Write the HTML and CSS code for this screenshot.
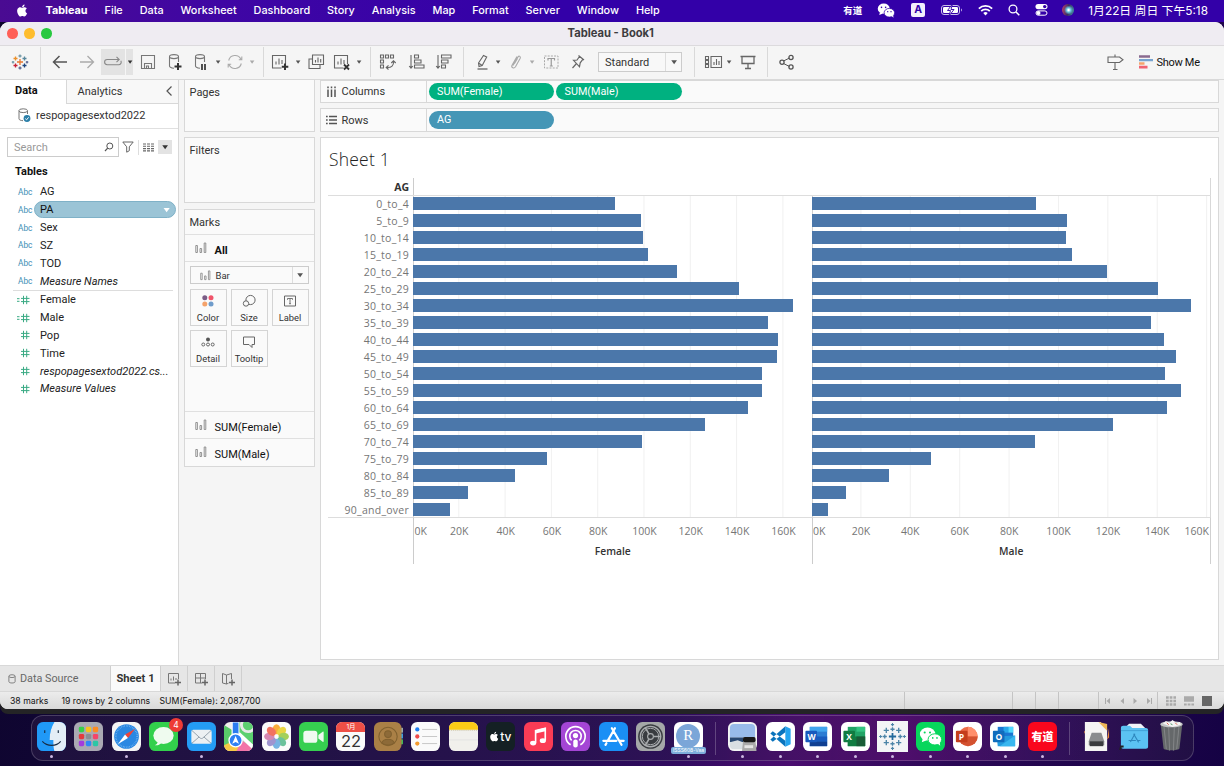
FILE: index.html
```html
<!DOCTYPE html>
<html lang="en">
<head>
<meta charset="utf-8">
<title>Tableau - Book1</title>
<link rel="stylesheet" href="styles.css">
</head>
<body>
<svg class="defs" aria-hidden="true">
  <defs>
    <symbol id="bars" viewBox="0 0 12 12"><path d="M.8 3.500h1.600v7H.8zM5 6.500h1.600v4H5zM9.200 1h1.600v9.500H9.200z" fill="none" stroke="#888" stroke-width=".9"/></symbol>
    <symbol id="hash" viewBox="0 0 14 10"><path d="M6.500 .8v8.400M9.700 .8v8.400M4 3.400h8.500M4 6.600h8.500" stroke="#3aab84" stroke-width="1" fill="none"/></symbol>
    <symbol id="eqhash" viewBox="0 0 14 10"><path d="M6.500 .8v8.400M9.700 .8v8.400M4 3.400h8.500M4 6.600h8.500M0 3.700h2.500M0 6.300h2.500" stroke="#3aab84" stroke-width="1" fill="none"/></symbol>
    <symbol id="down" viewBox="0 0 8 6"><path d="M1.800 1.500h4.600L4.100 4.700z" fill="currentColor"/></symbol>
    <symbol id="chart" viewBox="0 0 20 20"><path d="M15.500 12V3.500h-13v12.500h9M6 12.500V9.500M9 12.500V6.500M12 12V8" fill="none" stroke="#666" stroke-width="1.100"/></symbol>
    <symbol id="wechat" viewBox="0 0 24 20"><ellipse cx="9" cy="7.500" rx="8" ry="6.700"/><path d="M4 12l-1 4 5-2z"/><ellipse cx="16.500" cy="13" rx="7" ry="5.800" stroke="var(--ring)" stroke-width="1"/><path d="M19 17l3 2.500-.5-4z"/><g fill="var(--ring)"><circle cx="6" cy="5.800" r="1.100"/><circle cx="11.500" cy="5.800" r="1.100"/><circle cx="14.300" cy="11.500" r=".9"/><circle cx="18.700" cy="11.500" r=".9"/></g></symbol>
    <symbol id="apple" viewBox="0 0 24 24"><path d="M16.700 12.700c0-2.500 2-3.700 2.100-3.800-1.200-1.700-3-1.900-3.600-2-1.500-.1-3 .9-3.700.9-.8 0-2-.9-3.200-.9-1.700 0-3.200 1-4.100 2.400-1.700 3-.4 7.500 1.300 9.900.8 1.200 1.800 2.600 3.100 2.500 1.200 0 1.700-.8 3.200-.8s1.900.8 3.200.8c1.300 0 2.200-1.200 3-2.400 1-1.400 1.300-2.700 1.400-2.800-.1 0-2.700-1-2.700-3.800zM14.300 5.400c.7-.8 1.100-2 1-3.100-1 0-2.200.7-2.900 1.500-.6.700-1.200 1.900-1 3 1.100.1 2.200-.6 2.900-1.400z"/></symbol>
  </defs>
</svg>

<header class="menubar">
  <svg class="apple" viewBox="0 0 24 24"><use href="#apple" fill="#fff"/></svg>
  <b class="m-app">Tableau</b><span>File</span><span>Data</span><span>Worksheet</span><span>Dashboard</span><span>Story</span><span>Analysis</span><span>Map</span><span>Format</span><span>Server</span><span>Window</span><span>Help</span>
  <div class="tray">
    <b class="youdao">有道</b>
    <svg class="t-wechat" viewBox="0 0 24 20"><use href="#wechat" fill="#fff"/></svg>
    <i class="ime">A</i>
    <svg class="t-batt" viewBox="0 0 22 12"><rect x=".5" y="1.500" width="18" height="9" rx="2.500" fill="none" stroke="#c9bde8"/><rect x="2" y="3" width="15" height="6" rx="1.200" fill="#fff"/><path d="M20 4.500v3c1.200-.3 1.200-2.700 0-3z" fill="#c9bde8"/><path d="M11.500 0L6.500 6.500h3L8 12l5-6.500h-3z" fill="#fff" stroke="#3300a8" stroke-width=".9"/></svg>
    <svg class="t-wifi" viewBox="0 0 14 11"><path d="M.8 4.200a9 9 0 0 1 12.400 0M3 6.500a5.800 5.800 0 0 1 8 0" stroke="#fff" stroke-width="1.700" fill="none"/><path d="M4.900 8.400a3 3 0 0 1 4.200 0L7 10.600z" fill="#fff"/></svg>
    <svg class="t-find" viewBox="0 0 12 12"><circle cx="5" cy="5" r="3.900" fill="none" stroke="#fff" stroke-width="1.300"/><path d="M8 8l3.300 3.300" stroke="#fff" stroke-width="1.500"/></svg>
    <svg class="t-cc" viewBox="0 0 12 12"><rect width="12" height="5.200" rx="2.600" fill="#fff"/><circle cx="9.200" cy="2.600" r="1.700" fill="#3300a8"/><rect x=".5" y="6.900" width="11" height="4.300" rx="2.150" fill="none" stroke="#fff"/><circle cx="3" cy="9" r="2" fill="#fff"/></svg>
    <i class="siri"></i>
    <span class="clock">1月22日 周日 下午5:18</span>
  </div>
</header>

<main class="window">
  <div class="titlebar"><i class="dot red"></i><i class="dot amber"></i><i class="dot green"></i><b>Tableau - Book1</b></div>

  <div class="toolbar">
    <svg class="ic m10" viewBox="0 0 20 20"><g stroke-width="1.300" fill="none"><path d="M10 7v6M7 10h6" stroke="#e8762c"/><path d="M10 2.500v3M8.500 4h3" stroke="#7199a6"/><path d="M10 14.500v3M8.500 16h3" stroke="#5b6591"/><path d="M5.500 4.500v4M3.500 6.500h4" stroke="#eb912c"/><path d="M14.500 4.500v4M12.500 6.500h4" stroke="#59879b"/><path d="M5.500 11.500v4M3.500 13.500h4" stroke="#c72035"/><path d="M14.500 11.500v4M12.500 13.500h4" stroke="#1f447e"/><path d="M3 9v2.500M1.800 10.200h2.500" stroke="#7099a6"/><path d="M17 9v2.500M15.800 10.200h2.500" stroke="#5b6591"/></g></svg>
    <i class="sep m10"></i>
    <svg class="ic m9" viewBox="0 0 20 20"><path d="M17 10H3.500M9.500 4L3.500 10l6 6" fill="none" stroke="#555" stroke-width="1.500"/></svg>
    <svg class="ic m7" viewBox="0 0 20 20"><path d="M3 10h13.500M10.500 4l6 6-6 6" fill="none" stroke="#aaa" stroke-width="1.300"/></svg>
    <span class="hot m4"><svg class="ic" viewBox="0 0 20 20"><path d="M15.500 7.500H4.200a2.600 2.600 0 0 0 0 5.200H16a2.600 2.600 0 0 0 1.800-4M13.500 4.800l2.700 2.700-2.700 2.700" fill="none" stroke="#888" stroke-width="1.100"/></svg></span>
    <span class="hot slim m1"><svg class="dd dark" viewBox="0 0 8 6"><use href="#down"/></svg></span>
    <svg class="ic m5" viewBox="0 0 20 20"><path d="M3.500 3.500h13v13h-13zM6.500 16v-4.500h7V16M8.500 16v-2h2v2" fill="none" stroke="#777" stroke-width="1.100"/></svg>
    <svg class="ic m7" viewBox="0 0 20 20"><path d="M4.500 4.500v9.500c0 1.500 2 2 4.500 2.200M13.500 4.500V10" fill="none" stroke="#777" stroke-width="1.100"/><ellipse cx="9" cy="4.600" rx="4.500" ry="2" fill="none" stroke="#777" stroke-width="1.100"/><path d="M13 11v7M9.500 14.500h7" stroke="#333" stroke-width="2"/></svg>
    <svg class="ic m6" viewBox="0 0 20 20"><path d="M4.500 4.500v9.500c0 1.500 2 2 4.500 2.200M13.500 4.500V10" fill="none" stroke="#777" stroke-width="1.100"/><ellipse cx="9" cy="4.600" rx="4.500" ry="2" fill="none" stroke="#777" stroke-width="1.100"/><path d="M11 12v6M14 12v6" stroke="#333" stroke-width="1.700"/></svg>
    <svg class="dd m3" viewBox="0 0 8 6"><use href="#down"/></svg>
    <svg class="ic m3" viewBox="0 0 20 20"><path d="M3.700 8.500a6.500 6.500 0 0 1 12.200-1.300M16.300 11.500a6.500 6.500 0 0 1-12.200 1.300M16.800 4.500v3.200h-3M3.200 15.500v-3.200h3" fill="none" stroke="#aaa" stroke-width="1.100"/></svg>
    <svg class="dd pale m3" viewBox="0 0 8 6"><use href="#down"/></svg>
    <i class="sep m7"></i>
    <svg class="ic m6" viewBox="0 0 20 20"><use href="#chart"/><path d="M15 11.500v6.500M11.800 14.800h6.500" stroke="#333" stroke-width="2"/></svg>
    <svg class="dd m4" viewBox="0 0 8 6"><use href="#down"/></svg>
    <svg class="ic m4" viewBox="0 0 20 20"><path d="M6.500 3h11v9.500h-11zM6 7H3v9.500h11V13M9.500 10.500V8M12 10.500V5.500M14.700 10.500V7" fill="none" stroke="#666" stroke-width="1.100"/></svg>
    <svg class="ic m6" viewBox="0 0 20 20"><use href="#chart"/><path d="M12 12.500l5 5M17 12.500l-5 5" stroke="#333" stroke-width="1.800"/></svg>
    <svg class="dd m3" viewBox="0 0 8 6"><use href="#down"/></svg>
    <i class="sep m7"></i>
    <svg class="ic m7" viewBox="0 0 20 20"><path d="M2.500 3h3v3h-3zM7.500 3h3v3h-3zM12.500 3h3v3h-3zM2.500 8h3v3h-3zM2.500 13h3v3h-3zM8.500 15.500c5 .5 7.500-2 7-6.500M10.500 13.300l-2.300 2.200 2.300 2M13.300 11l2.200-2.300 2.200 2.300" fill="none" stroke="#666" stroke-width="1.100"/></svg>
    <svg class="ic m9" viewBox="0 0 20 20"><path d="M4 3v13M2.200 14l1.800 2.200L5.800 14M7.500 3h4v3h-4zM7.500 8h6.500v3H7.500zM7.500 13h9.500v3H7.500z" fill="none" stroke="#666" stroke-width="1.100"/></svg>
    <svg class="ic m7" viewBox="0 0 20 20"><path d="M4 3v13M2.200 14l1.800 2.200L5.800 14M7.500 3h9.500v3H7.500zM7.500 8H14v3H7.500zM7.500 13h4v3h-4z" fill="none" stroke="#666" stroke-width="1.100"/></svg>
    <i class="sep m9"></i>
    <svg class="ic m9" viewBox="0 0 20 20"><path d="M5.500 11L10.500 3.500l3.200 1.500-4.500 8.500-3.200 1zM5.500 11l3.700 2.500" fill="none" stroke="#666" stroke-width="1.100"/><path d="M4.500 17h10" stroke="#777" stroke-width="1.500"/></svg>
    <svg class="dd m1" viewBox="0 0 8 6"><use href="#down"/></svg>
    <svg class="ic m4" viewBox="0 0 20 20"><path d="M7 13.500l5-8.500c1-1.600 3-.5 2.200 1.200L9.500 14.800c-1.500 2.300-4.600.8-3.500-1.600L11 4.500M8.500 11.500l3-5" fill="none" stroke="#aaa" stroke-width="1.100"/></svg>
    <svg class="dd pale m2" viewBox="0 0 8 6"><use href="#down"/></svg>
    <svg class="ic m5" viewBox="0 0 20 20"><rect x="3.500" y="4" width="13.500" height="12" fill="none" stroke="#aaa" stroke-dasharray="2 1.200"/><path d="M7 8.500v-2h6.500v2M10.250 6.500v7.500M8.800 14h3" fill="none" stroke="#999" stroke-width="1.200"/></svg>
    <svg class="ic m7" viewBox="0 0 20 20"><path d="M10.500 3.500l5.500 4.500M11.500 4.500L9 8l-3.500.3 6 6.500.7-4L15 7.200M8.500 11.500L4.500 16" fill="none" stroke="#666" stroke-width="1.200"/></svg>
    <div class="select m10"><span>Standard</span><i><svg class="dd big" viewBox="0 0 8 6"><use href="#down"/></svg></i></div>
    <i class="sep m12"></i>
    <svg class="ic m9" viewBox="0 0 20 20"><path d="M1.500 4.500h3v3h-3zM1.500 8.500h3v3h-3zM1.500 12.500h3v3h-3zM7 4.500h10.500v11H7zM10 13v-3M12.500 13V7M15 13V9" fill="none" stroke="#666" stroke-width="1.100"/></svg>
    <svg class="dd m1" viewBox="0 0 8 6"><use href="#down"/></svg>
    <svg class="ic m5" viewBox="0 0 20 20"><path d="M2.500 4.500h15M4 5v6.500h12V5M10 11.500V16M7 16.500h6" fill="none" stroke="#666" stroke-width="1.300"/></svg>
    <i class="sep m9"></i>
    <svg class="ic m9" viewBox="0 0 20 20"><path d="M6.500 9l6-3M6.500 11.500l6 3" stroke="#555"/><g fill="none" stroke="#555" stroke-width="1.300"><circle cx="5" cy="10.300" r="2.100"/><circle cx="14" cy="5.500" r="2.100"/><circle cx="14" cy="15" r="2.100"/></g></svg>
    <div class="showme">
      <svg class="ic" viewBox="0 0 20 20"><path d="M3 5h11.500L18 7.800l-3.500 2.700H3zM10 2.500V5M10 10.500v7M8 17.500h4.500" fill="none" stroke="#666" stroke-width="1.100"/></svg>
      <svg class="sm-bars" viewBox="0 0 14 14"><path d="M0 .3h11v2.400H0z" fill="#8a6a8f"/><path d="M0 3.900h14v2.400H0z" fill="#77a3cf"/><path d="M0 7.300h5.500v2.400H0z" fill="#f5a36c"/><path d="M0 10.800h8.500v2.700H0z" fill="#f06372"/></svg>
      <span>Show Me</span>
    </div>
  </div>

  <div class="body">
    <aside class="data">
      <div class="dtabs"><b>Data</b><span>Analytics<svg viewBox="0 0 8 12"><path d="M6.500 1.500L2 6l4.500 4.500" fill="none" stroke="#555" stroke-width="1.200"/></svg></span></div>
      <div class="source"><svg viewBox="0 0 13 14"><path d="M1 2.800v8c0 1 1.500 1.700 4 1.900M9.500 2.800V6" fill="none" stroke="#777"/><ellipse cx="5.200" cy="2.700" rx="4.300" ry="1.900" fill="none" stroke="#777"/><circle cx="9" cy="10.500" r="3.400" fill="#2b7fa8"/><path d="M7.300 10.600l1.300 1.200 2-2.500" stroke="#fff" fill="none"/></svg><span>respopagesextod2022</span></div>
      <div class="searchrow">
        <div class="search"><span>Search</span><svg viewBox="0 0 10 10"><circle cx="5.800" cy="4" r="3" fill="none" stroke="#555"/><path d="M3.700 6.200L1 9" stroke="#555" stroke-width="1.200"/></svg></div>
        <svg class="funnel" viewBox="0 0 12 12"><path d="M.8 1h10.400L7.300 5.800v3.900l-2.600 1.500V5.800z" fill="none" stroke="#666"/></svg>
        <i class="vsep"></i>
        <svg class="gridic" viewBox="0 0 11 9"><path d="M0 1h11M0 3.300h11M0 5.600h11M0 7.900h11" stroke="#666" stroke-width="1.100" stroke-dasharray="3 1"/></svg>
        <span class="drop"><svg class="dd big dark" viewBox="0 0 8 6"><use href="#down"/></svg></span>
      </div>
      <b class="tables">Tables</b>
      <ul class="fields dims">
        <li><i>Abc</i><span>AG</span></li>
        <li class="sel"><i>Abc</i><span>PA<svg class="dd white" viewBox="0 0 8 6"><use href="#down"/></svg></span></li>
        <li><i>Abc</i><span>Sex</span></li>
        <li><i>Abc</i><span>SZ</span></li>
        <li><i>Abc</i><span>TOD</span></li>
        <li><i>Abc</i><em>Measure Names</em></li>
      </ul>
      <ul class="fields meas">
        <li><svg viewBox="0 0 14 10"><use href="#eqhash"/></svg><span>Female</span></li>
        <li><svg viewBox="0 0 14 10"><use href="#eqhash"/></svg><span>Male</span></li>
        <li><svg viewBox="0 0 14 10"><use href="#hash"/></svg><span>Pop</span></li>
        <li><svg viewBox="0 0 14 10"><use href="#hash"/></svg><span>Time</span></li>
        <li><svg viewBox="0 0 14 10"><use href="#hash"/></svg><em class="long">respopagesextod2022.cs...</em></li>
        <li><svg viewBox="0 0 14 10"><use href="#hash"/></svg><em>Measure Values</em></li>
      </ul>
    </aside>

    <section class="cards">
      <div class="card pages">Pages</div>
      <div class="card filters">Filters</div>
      <div class="card marks">
        <div class="mhead">Marks</div>
        <div class="mrow all"><svg viewBox="0 0 12 12"><use href="#bars"/></svg><b>All</b></div>
        <div class="mbody">
          <div class="mtype"><svg viewBox="0 0 12 12"><use href="#bars"/></svg><span>Bar</span><i><svg class="dd big" viewBox="0 0 8 6"><use href="#down"/></svg></i></div>
          <div class="mbtns">
            <div><svg viewBox="0 0 14 14"><circle cx="3.800" cy="3.800" r="2.500" fill="#7b5c86"/><circle cx="10" cy="3.800" r="2.500" fill="#f0556b"/><circle cx="3.800" cy="10" r="2.500" fill="#f4a26b"/><circle cx="10" cy="10" r="2.500" fill="#6f9ccb"/></svg>Color</div>
            <div><svg viewBox="0 0 14 14"><circle cx="8.500" cy="6" r="4.600" fill="none" stroke="#666"/><circle cx="4" cy="9.500" r="2.700" fill="#fafafa" stroke="#666"/></svg>Size</div>
            <div><svg viewBox="0 0 14 14"><path d="M1.500 2h11v10h-11z" fill="none" stroke="#666"/><path d="M4.500 5.800V4.500h5v1.300M7 4.500v5M6 9.700h2" fill="none" stroke="#666" stroke-width=".9"/></svg>Label</div>
            <div><svg viewBox="0 0 14 14"><circle cx="7" cy="4.500" r="2" fill="#555"/><g fill="none" stroke="#666"><circle cx="2.300" cy="9.500" r="1.500"/><circle cx="7" cy="9.500" r="1.500"/><circle cx="11.700" cy="9.500" r="1.500"/></g></svg>Detail</div>
            <div><svg viewBox="0 0 14 14"><path d="M1.500 2h11v7.500H10v3l-3-3H1.500z" fill="none" stroke="#666"/></svg>Tooltip</div>
          </div>
        </div>
        <div class="mrow"><svg viewBox="0 0 12 12"><use href="#bars"/></svg><span>SUM(Female)</span></div>
        <div class="mrow"><svg viewBox="0 0 12 12"><use href="#bars"/></svg><span>SUM(Male)</span></div>
      </div>
    </section>

    <section class="work">
      <div class="shelf">
        <div class="sname"><svg viewBox="0 0 11 11"><path d="M2 3.500V11M5.500 3.500V11M9 3.500V11M2 .5v1.700M5.500 .5v1.700M9 .5v1.700" stroke="#555" stroke-width="1.500"/></svg>Columns</div>
        <span class="pill green">SUM(Female)</span><span class="pill green">SUM(Male)</span>
      </div>
      <div class="shelf rows">
        <div class="sname"><svg viewBox="0 0 11 11"><path d="M3 1.500h8M3 5h8M3 8.500h8M0 1.500h1.700M0 5h1.700M0 8.500h1.700" stroke="#555" stroke-width="1.400"/></svg>Rows</div>
        <span class="pill blue">AG</span>
      </div>
      <div class="sheet">
        <h1>Sheet 1</h1>
        <div class="viz">
          <div class="vhead"><b>AG</b><i></i></div>
          <div class="vmain">
            <div class="labels" id="labels"></div>
            <div class="pane" id="female"></div>
            <div class="pane" id="male"></div>
          </div>
          <div class="vaxes">
            <div class="corner"></div>
            <div class="axis" id="axis-female"><b>Female</b></div>
            <div class="axis" id="axis-male"><b>Male</b></div>
          </div>
        </div>
      </div>
    </section>
  </div>

  <div class="tabs">
    <div class="tab src"><svg viewBox="0 0 9 11"><path d="M1 2.500v6c0 2 7 2 7 0v-6" fill="none" stroke="#777"/><ellipse cx="4.500" cy="2.300" rx="3.500" ry="1.600" fill="none" stroke="#777"/></svg><span>Data Source</span></div>
    <div class="tab cur"><b>Sheet 1</b></div>
    <div class="tab add"><svg viewBox="0 0 14 14"><path d="M11.500 7V1.500h-10V11H8M4 8.500v-2M6.500 8.500v-4M9 8V6" fill="none" stroke="#777"/><path d="M11 7.500v6M8 10.500h6" stroke="#666" stroke-width="1.500"/></svg></div>
    <div class="tab add"><svg viewBox="0 0 14 14"><path d="M11.500 7V1.500h-10V11H8M1.500 6h10M6.500 1.500V11" fill="none" stroke="#777"/><path d="M11 7.500v6M8 10.500h6" stroke="#666" stroke-width="1.500"/></svg></div>
    <div class="tab add"><svg viewBox="0 0 14 14"><path d="M1.500 1.500l4 1.500 5-1.500V7M1.500 1.500V11l4 1 2-.8M5.500 3v9" fill="none" stroke="#777"/><path d="M11 7.500v6M8 10.500h6" stroke="#666" stroke-width="1.500"/></svg></div>
  </div>
  <div class="status">
    <span class="s1">38 marks</span><span class="s2">19 rows by 2 columns</span><span class="s3">SUM(Female): 2,087,700</span>
    <i class="c1"></i><i class="c2"></i><i class="c2"></i><i class="c3"></i>
    <div class="nav">
      <svg viewBox="0 0 8 8"><path d="M1.500 1v6" stroke="#aaa"/><path d="M6 1L2.500 4 6 7z" fill="#aaa"/></svg>
      <svg viewBox="0 0 8 8"><path d="M6 1L2.500 4 6 7z" fill="#aaa"/></svg>
      <svg viewBox="0 0 8 8"><path d="M2.500 1L6 4 2.500 7z" fill="#aaa"/></svg>
      <svg viewBox="0 0 8 8"><path d="M6.500 1v6" stroke="#aaa"/><path d="M2 1l3.500 3L2 7z" fill="#aaa"/></svg>
    </div>
    <div class="views">
      <svg viewBox="0 0 10 10"><path d="M0 1.500h10M0 5h10M0 8.500h10" stroke="#aaa" stroke-width="2.400" stroke-dasharray="2.700 1"/></svg>
      <svg viewBox="0 0 10 10"><path d="M0 .3h10v5.500H0z" fill="#aaa"/><path d="M0 8.500h10" stroke="#aaa" stroke-width="2.200" stroke-dasharray="2.700 1"/></svg>
      <svg viewBox="0 0 10 10"><path d="M0 0h10v10H0z" fill="#666"/></svg>
    </div>
  </div>
</main>

<footer class="dock">
  <div class="app run"><svg viewBox="0 0 30 30"><rect width="30" height="30" rx="6.500" fill="#1b8df5"/><path d="M18 0h5.500a6.500 6.500 0 0 1 6.500 6.500v17a6.500 6.500 0 0 1-6.500 6.500H18c-1-3-1.200-7-1.200-11.500H13C13 11 15 5 18 0z" fill="#e3edf6"/><path d="M6 0h12c-3 5-5 11-5 18.500h3.800V30H6.500A6.500 6.500 0 0 1 0 23.500v-17A6.500 6.500 0 0 1 6.500 0z" fill="#29a8fa" opacity=".45"/><path d="M8 8.500v3M22 8.500v3M5.500 20c5 5.500 14.500 5.500 19 0" stroke="#182c44" stroke-width="1.200" fill="none"/></svg></div>
  <div class="app"><svg viewBox="0 0 30 30"><rect width="30" height="30" rx="6.500" fill="#aaa9b3"/><g><rect x="5" y="5" width="5.500" height="5.500" rx="1.500" fill="#37d04b"/><rect x="12.300" y="5" width="5.500" height="5.500" rx="1.500" fill="#f8c21c"/><rect x="19.500" y="5" width="5.500" height="5.500" rx="1.500" fill="#fd8b23"/><rect x="5" y="12.300" width="5.500" height="5.500" rx="1.500" fill="#e43a3d"/><rect x="12.300" y="12.300" width="5.500" height="5.500" rx="1.500" fill="#8a8e95"/><rect x="19.500" y="12.300" width="5.500" height="5.500" rx="1.500" fill="#f4466b"/><rect x="5" y="19.500" width="5.500" height="5.500" rx="1.500" fill="#a33bdd"/><rect x="12.300" y="19.500" width="5.500" height="5.500" rx="1.500" fill="#3087f5"/><rect x="19.500" y="19.500" width="5.500" height="5.500" rx="1.500" fill="#2cc7a5"/></g></svg></div>
  <div class="app run"><svg viewBox="0 0 30 30"><rect width="30" height="30" rx="6.500" fill="#f4f4f4"/><circle cx="15" cy="15" r="12.800" fill="#2a87e2"/><circle cx="15" cy="15" r="11" fill="none" stroke="#8fc7f6" stroke-width="1.500" stroke-dasharray=".5 1.200"/><path d="M24 7L13.500 13l3 3.500z" fill="#f04438"/><path d="M6 23l7.500-10 3 3.500z" fill="#fff"/></svg></div>
  <div class="app"><svg viewBox="0 0 30 30"><rect width="30" height="30" rx="6.500" fill="#32d04c"/><ellipse cx="15" cy="14" rx="10.500" ry="8.800" fill="#effbef"/><path d="M9 20c0 2-1 3.500-3 4 3 .5 5-.5 6.500-2z" fill="#effbef"/></svg><em class="badge">4</em></div>
  <div class="app run"><svg viewBox="0 0 30 30"><rect width="30" height="30" rx="6.500" fill="#249cf5"/><rect x="4.500" y="8" width="21" height="14.500" rx="2" fill="#ecf0f3"/><path d="M5 8.700l8.500 7.800c1 .8 2 .8 3 0L25 8.700M5 22l7.500-6.500M25 22l-7.500-6.500" stroke="#8a98a5" stroke-width=".9" fill="none"/></svg></div>
  <div class="app"><svg viewBox="0 0 30 30"><clipPath id="mapclip"><rect width="30" height="30" rx="6.500"/></clipPath><g clip-path="url(#mapclip)"><rect width="30" height="30" fill="#f1efec"/><path d="M0 3l8 5v14L0 25z" fill="#59c969"/><path d="M15 0h15v30L15 15z" fill="#5dd070"/><path d="M0 30V24l9-4 14 10z" fill="#f6c945"/><path d="M13 30l5-11 12 7v4z" fill="#f274a8"/><path d="M15 12l15 14" stroke="#fff" stroke-width="4"/><circle cx="25" cy="3" r="7" fill="none" stroke="#e8e8e8" stroke-width="3"/><path d="M8.500 0h7v15h-7z" fill="#2b7cf0" stroke="#fff"/><circle cx="12" cy="19" r="6.800" fill="#2f80f3" stroke="#fff" stroke-width="1.400"/><path d="M12 14.500l3.500 8-3.500-1.800-3.500 1.800z" fill="#fff"/></g></svg></div>
  <div class="app"><svg viewBox="0 0 30 30"><rect width="30" height="30" rx="6.500" fill="#fbfbfb"/><g opacity=".85" transform="translate(15 15)"><ellipse cy="-7.500" rx="4" ry="5.300" fill="#f9a11b"/><ellipse cy="-7.500" rx="4" ry="5.300" fill="#e7cf24" transform="rotate(45)"/><ellipse cy="-7.500" rx="4" ry="5.300" fill="#96c93f" transform="rotate(90)"/><ellipse cy="-7.500" rx="4" ry="5.300" fill="#52b98b" transform="rotate(135)"/><ellipse cy="-7.500" rx="4" ry="5.300" fill="#5fa7de" transform="rotate(180)"/><ellipse cy="-7.500" rx="4" ry="5.300" fill="#8f83c8" transform="rotate(225)"/><ellipse cy="-7.500" rx="4" ry="5.300" fill="#d175a7" transform="rotate(270)"/><ellipse cy="-7.500" rx="4" ry="5.300" fill="#f15b45" transform="rotate(315)"/></g></svg></div>
  <div class="app"><svg viewBox="0 0 30 30"><rect width="30" height="30" rx="6.500" fill="#36cf50"/><rect x="4.500" y="9" width="14.500" height="12.500" rx="3" fill="#effaf0"/><path d="M20 13.500l4.500-3.500c.8-.4 1 0 1 .5v9.500c0 .7-.5.9-1 .5L20 17z" fill="#effaf0"/></svg></div>
  <div class="app cal"><span><i>1月</i><b>22</b></span></div>
  <div class="app"><svg viewBox="0 0 30 30"><path d="M27 6h3v5h-3z" fill="#9aa"/><path d="M27 12h3v5h-3z" fill="#3d9fe0"/><path d="M27 18h3v5h-3z" fill="#46b756"/><rect width="28.500" height="30" rx="6.500" fill="#aa8046"/><g fill="none" stroke="#80602f" stroke-width="1.100"><circle cx="14.500" cy="15" r="9.500"/><circle cx="14.500" cy="12.500" r="3.500" fill="#8d6a38"/><path d="M8 21.500c2-5 11-5 13 0-3 3-10 3-13 0z" fill="#8d6a38"/></g></svg></div>
  <div class="app"><svg viewBox="0 0 30 30"><rect width="30" height="30" rx="6.500" fill="#fafafa"/><circle cx="6.500" cy="7.700" r="2.200" fill="#1d7df0"/><circle cx="6.500" cy="15" r="2.200" fill="#f04b48"/><circle cx="6.500" cy="22.300" r="2.200" fill="#f39a2d"/><path d="M11.500 7.700H27M11.500 15H27M11.500 22.300H27" stroke="#c6c6c6"/></svg></div>
  <div class="app"><svg viewBox="0 0 30 30"><rect width="30" height="30" rx="6.500" fill="#f1f0ec"/><path d="M0 8V6.500A6.500 6.500 0 0 1 6.500 0h17A6.500 6.500 0 0 1 30 6.500V8z" fill="#fccb16"/><path d="M0 8.600h30" stroke="#b5a67a" stroke-width=".6" stroke-dasharray="1 1"/><path d="M0 18.500h30" stroke="#ddd" stroke-width=".7"/></svg></div>
  <div class="app tv"><span><svg viewBox="3 1 18 22"><use href="#apple" width="24" height="24" fill="#fff"/></svg><b>tv</b></span></div>
  <div class="app"><svg viewBox="0 0 30 30"><rect width="30" height="30" rx="6.500" fill="#fb3c55"/><path d="M12 21.500V9l10-2.500v12.500" fill="none" stroke="#fff" stroke-width="1.700"/><path d="M12 8.500l10-2.500v3.500L12 12z" fill="#fff"/><ellipse cx="9.500" cy="21.800" rx="3.200" ry="2.500" fill="#fff"/><ellipse cx="19.500" cy="19.300" rx="3.200" ry="2.500" fill="#fff"/></svg></div>
  <div class="app"><svg viewBox="0 0 30 30"><rect width="30" height="30" rx="6.500" fill="#a445d5"/><g fill="none" stroke="#fff" stroke-width="1.700"><path d="M10 23.500a10 10 0 1 1 10 0"/><path d="M11 19a5.900 5.900 0 1 1 8 0"/></g><circle cx="15" cy="14" r="2.700" fill="#fff"/><rect x="12.700" y="18" width="4.600" height="8.500" rx="2.200" fill="#fff"/></svg></div>
  <div class="app"><svg viewBox="0 0 30 30"><rect width="30" height="30" rx="6.500" fill="#1a8ff5"/><path d="M16.500 6.500L9 19.500M13.300 6.500l10 17M4.500 19.500h13.500M21 19.500h4.500M7.700 22l-1 1.700" stroke="#fff" stroke-width="2.300" stroke-linecap="round"/></svg></div>
  <div class="app"><svg viewBox="0 0 30 30"><rect width="30" height="30" rx="6.500" fill="#a5a8a8"/><circle cx="15" cy="15" r="12.800" fill="#393c40"/><g fill="none" stroke="#a9acae"><circle cx="15" cy="15" r="10.500" stroke-width="1.500"/><circle cx="15" cy="15" r="8.500" stroke-width="1"/><circle cx="15" cy="15" r="3" stroke-width="1.200"/><path d="M18 15h8M13.500 12.500l-4-7M13.500 17.500l-4 7" stroke-width="1.700"/></g></svg></div>
  <div class="app run rs"><span><b>R</b></span><em>ISSS608-Vaa</em></div>
  <i class="dsep"></i>
  <div class="app run"><svg viewBox="0 0 30 30"><rect width="30" height="30" rx="6.500" fill="#f2f3f4"/><path d="M2 6a4 4 0 0 1 4-4h18a4 4 0 0 1 4 4v10H2z" fill="#98bbea"/><path d="M2 16h26v5H2z" fill="#294872"/><path d="M2 21l8-2 8 3v6H6a4 4 0 0 1-4-4z" fill="#d9dfe3"/><path d="M16 16h12l1.500 14H14.500z" fill="#aaa"/><rect x="15.500" y="15.500" width="13" height="5.500" rx="2" fill="#171717"/><path d="M17 24h9v3h-9z" fill="#e5e5e5"/></svg></div>
  <div class="app run"><svg viewBox="0 0 30 30"><rect width="30" height="30" rx="6.500" fill="#fff"/><path d="M20 4.500l5.500 2.500v16L20 25.500z" fill="#24a4ef"/><path d="M20 4.500v6L7 20.500 4.500 18zM20 25.500v-6L7 9.500 4.500 12z" fill="#0b74bd"/></svg></div>
  <div class="app run"><svg viewBox="0 0 30 30"><rect width="30" height="30" rx="6.500" fill="#fff"/><path d="M7 5h18v20H7z" fill="#2b7cd3"/><path d="M7 5h18v5H7z" fill="#41a5ee"/><path d="M7 20h18v5H7z" fill="#103f91"/><path d="M7 15h18v5H7z" fill="#185abd"/><rect x="2.500" y="9" width="12" height="12" rx="1" fill="#185abd"/></svg><b class="ltr">W</b></div>
  <div class="app run"><svg viewBox="0 0 30 30"><rect width="30" height="30" rx="6.500" fill="#fff"/><path d="M7 5h18v20H7z" fill="#21a366"/><path d="M16 5h9v5h-9z" fill="#33c481"/><path d="M7 15h18v10H7z" fill="#107c41"/><path d="M16 15h9v10h-9z" fill="#185c37"/><rect x="2.500" y="9" width="12" height="12" rx="1" fill="#107c41"/></svg><b class="ltr">X</b></div>
  <div class="app run big"><svg viewBox="0 0 30 30"><path d="M0 0h30v30H0z" fill="#f3f4f6"/><g stroke="#4c84a8" stroke-width="1.300"><path d="M15 11.500v7M11.500 15h7" stroke="#23699b" stroke-width="1.700"/><path d="M9 6.500v5M6.500 9h5M21 6.500v5M18.500 9h5M9 18.500v5M6.500 21h5M21 18.500v5M18.500 21h5M15 6v4M13 8h4M15 20v4M13 22h4M7.500 13v4M5.500 15h4M22.500 13v4M20.500 15h4"/><path d="M3.500 13.500v3M2 15h3M26.500 13.500v3M25 15h3M15 2v3M13.500 3.500h3M15 25v3M13.500 26.500h3" stroke-width="1"/></g></svg></div>
  <div class="app run"><svg viewBox="0 0 30 30"><rect width="30" height="30" rx="6.500" fill="#07d65c"/><svg class="wx" x="3" y="5" width="24" height="20" viewBox="0 0 24 20"><use href="#wechat" fill="#fff"/></svg></svg></div>
  <div class="app run"><svg viewBox="0 0 30 30"><rect width="30" height="30" rx="6.500" fill="#fff"/><circle cx="15.500" cy="15" r="10" fill="#ed6c47"/><path d="M15.500 5a10 10 0 0 1 10 10h-10z" fill="#ff8f6b"/><path d="M5.500 15h20a10 10 0 0 1-20 0z" fill="#d35230"/><rect x="3" y="9" width="12" height="12" rx="1" fill="#c43e1c"/></svg><b class="ltr">P</b></div>
  <div class="app run"><svg viewBox="0 0 30 30"><rect width="30" height="30" rx="6.500" fill="#fff"/><path d="M8 5h16v13H8z" fill="#1976d2"/><path d="M14 5h5v6h-5z" fill="#28a8ea"/><path d="M19 5h5v6h-5z" fill="#50d9ff"/><path d="M7 15l19-1v11H8z" fill="#239ade"/><path d="M26 14L10 25h16z" fill="#39b7ef"/><rect x="3" y="9" width="12" height="12" rx="1" fill="#0f6cbd"/></svg><b class="ltr">O</b></div>
  <div class="app run yd"><span>有道</span></div>
  <i class="dsep"></i>
  <div class="app"><svg viewBox="0 0 30 30"><path d="M2 10l3-2v8zM28 6l-2 12 2-2z" fill="#e88a3b"/><path d="M3 0h16l7 7v23H3z" fill="#f5f5f3"/><path d="M17 0l9 9V2z" fill="#efb857"/><path d="M10 11h10l3 9v4H7v-4z" fill="#8a8c8e"/><path d="M8 20h14v5H8z" fill="#3a3c3e"/></svg></div>
  <div class="app"><svg viewBox="0 0 32 30"><path d="M5 6l5-5h13l5 5z" fill="#f0f3f8"/><path d="M1 5.500C1 4 2 3 3.500 3H11l2.500 2.500h15C30 5.500 31 6.500 31 8v18c0 1.500-1 2.500-2.500 2.500h-25C2 28.500 1 27.500 1 26z" fill="#5bc2f2"/><path d="M1 8.500h30" stroke="#3f9fd3"/><path d="M16.500 12l-5 9M15 12l5.500 9.500M9.500 19.500h8M19.500 19.500h3" stroke="#2e87bd" stroke-width="1.200"/><path d="M0 30l1-4h3" stroke="#222" stroke-width="2" fill="none"/></svg></div>
  <div class="app trash"><svg viewBox="0 0 26 34"><path d="M1.500 4h23l-3 26c-.3 3-16.700 3-17 0z" fill="#65686a"/><path d="M5 7l2.500 24M10 8l1 24.500M16 8l-1 24.500M21 7l-2.500 24" stroke="#85888a" stroke-width="1"/><ellipse cx="13" cy="4.500" rx="12" ry="3.300" fill="#c5c7c8"/><path d="M4 4l3-3 4 2 3-3 4 3 4-1 1 3-9 2.500z" fill="#f4f4f4"/><path d="M8 3l2 2M17 3l2 2" stroke="#d35b42"/><path d="M12 4l2 1" stroke="#43905c"/></svg></div>
</footer>
<script src="chart.js"></script>
</body>
</html>
```

FILE: styles.css
```css
* { box-sizing: border-box; }
body {
  margin: 0; width: 1224px; height: 766px; overflow: hidden;
  display: flex; flex-direction: column;
  font-family: Inter, "Noto Sans CJK SC", sans-serif; font-size: 11px; color: #333;
  background: linear-gradient(100deg, #0c042a 0%, #190a45 40%, #310b60 60%, #4a0d70 68%, #2a0855 80%, #150244 100%);
}
svg { display: block; flex: none; overflow: visible; }
.defs { position: absolute; width: 0; height: 0; }
ul { margin: 0; padding: 0; list-style: none; }
i { font-style: normal; }

/* menu bar */
.menubar {
  height: 22px; flex: none; display: flex; align-items: center; padding: 0 0 2px 15px;
  background: linear-gradient(90deg, #4a0b92, #3f06a4 18%, #3300a8 45%, #3300a8);
  color: #fff; font-size: 10.850px; font-weight: 500; gap: 16.950px; white-space: nowrap;
}
.apple { width: 15px; height: 15px; margin-right: -1.500px; }
.m-app { font-weight: 700; }
.tray { margin-left: auto; display: flex; align-items: center; height: 20px; padding-right: 16px; }
.youdao { font-size: 9.500px; width: 34px; }
.t-wechat { width: 18px; height: 15px; margin-right: 16px; --ring: #3300a8; }
.ime { width: 14px; height: 14px; background: #f3effc; color: #3300a8; border-radius: 2px; font: 700 10.500px/14px Inter; text-align: center; margin-right: 16px; }
.t-batt { width: 22px; height: 12px; margin-right: 15px; }
.t-wifi { width: 15px; height: 12px; margin-right: 15px; }
.t-find { width: 12px; height: 12px; margin-right: 15px; }
.t-cc { width: 13px; height: 12px; margin-right: 14px; }
.siri { width: 12px; height: 12px; border-radius: 50%; background: radial-gradient(circle at 55% 50%, #fff 6%, #6ac8e0 24%, transparent 50%), linear-gradient(100deg, #c2476e, #3b2b60 50%, #3f9fa6); margin-right: 14px; }
.clock { font-size: 11.850px; font-weight: 400; padding-bottom: 2px; }

/* window */
.window { flex: none; width: 1224px; height: 687px; border-radius: 9px 9px 8px 8px; overflow: hidden; background: #f5f5f5; display: flex; flex-direction: column; box-shadow: 0 5px 0 #242426; font-family: Roboto, sans-serif; }
.titlebar { height: 24px; flex: none; background: #efecf2; border-bottom: 1px solid #dcdadd; display: flex; align-items: center; gap: 6.500px; padding-left: 7px; }
.titlebar b { font: 700 11.200px Inter; color: #3d3c40; margin-left: 509.500px; padding-bottom: 1px; }
.dot { width: 10.500px; height: 10.500px; border-radius: 50%; }
.red { background: #ff5f57; } .amber { background: #febc2e; } .green { background: #28c840; }

.toolbar { height: 34px; flex: none; display: flex; align-items: center; border-bottom: 1px solid #d9d9d9; background: #f5f5f5; padding-bottom: 1px; }
.ic { width: 20px; height: 20px; }
.dd { width: 8px; height: 6px; color: #555; }
.dd.pale { color: #aaa; } .dd.dark { color: #333; } .dd.white { color: #fff; width: 11px; height: 8px; } .dd.big { width: 10px; height: 8px; }
.sep { width: 1px; height: 30px; background: #d9d9d9; }
.hot { width: 24px; height: 26px; background: #e3e3e3; display: flex; align-items: center; justify-content: center; }
.hot.slim { width: 7px; }
.m1 { margin-left: 1px; } .m2 { margin-left: 2px; } .m3 { margin-left: 3px; } .m4 { margin-left: 4px; } .m5 { margin-left: 5px; }
.m6 { margin-left: 6px; } .m7 { margin-left: 7px; } .m9 { margin-left: 9px; } .m10 { margin-left: 10px; } .m12 { margin-left: 12px; }
.select { width: 84px; height: 20px; border: 1px solid #ccc; display: flex; align-items: center; padding-left: 6px; background: #f8f8f8; font-size: 11px; }
.select i { margin-left: auto; width: 16px; height: 18px; border-left: 1px solid #ddd; display: flex; align-items: center; justify-content: center; }
.showme { margin-left: auto; display: flex; align-items: center; color: #111; font-size: 11px; }
.showme span { width: 67.500px; letter-spacing: -.3px; }
.sm-bars { width: 14px; height: 14px; margin: 0 4px 0 13.500px; }

.body { height: 585px; flex: none; display: flex; }

/* data pane */
.data { width: 178.500px; border-right: 1px solid #d8d8d8; background: #fff; }
.dtabs { display: flex; height: 24px; }
.dtabs b { width: 66px; padding: 3px 0 0 15px; font-size: 11px; color: #111; line-height: 15px; }
.dtabs span { flex: 1; display: flex; align-items: center; background: #f8f8f8; border: solid #d8d8d8; border-width: 0 0 1px 1px; padding: 0 5px 1px 10.500px; font-size: 11px; }
.dtabs svg { width: 8px; height: 12px; margin-left: auto; }
.source { height: 25px; border-bottom: 1px solid #e0e0e0; display: flex; align-items: center; padding: 0 0 2px 18px; font-size: 11px; }
.source svg { width: 13px; height: 14px; margin-right: 5px; }
.searchrow { display: flex; align-items: center; padding: 8px 0 0 7px; }
.search { width: 112px; height: 20px; border: 1px solid #ccc; display: flex; align-items: center; justify-content: space-between; padding: 0 4px 0 6px; color: #999; }
.search svg { width: 10px; height: 10px; }
.funnel { width: 12px; height: 12px; margin-left: 3px; }
.vsep { width: 1px; height: 15px; background: #ddd; margin-left: 4px; }
.gridic { width: 11px; height: 9px; margin-left: 4px; }
.drop { width: 14px; height: 14px; background: #e3e3e3; margin-left: 4px; display: flex; align-items: center; justify-content: center; }
.tables { display: block; padding: 8px 0 0 15px; line-height: 14px; color: #111; font-size: 11px; margin-bottom: 4px; }
.fields { color: #222; font-size: 11px; }
.fields li { height: 17.850px; display: flex; align-items: center; }
.fields i { width: 22px; padding-left: 18px; margin-right: 18px; color: #3d8fb5; font-size: 8.300px; font-weight: 400; }
.fields li > svg { width: 14px; height: 10px; margin: 0 9px 0 17px; }
.dims { height: 107px; }
.sel > i { margin-right: 12px; }
.sel span { width: 142px; height: 17px; border-radius: 9px; background: #9bc4d6; border: 1px solid #7fb1c7; display: flex; align-items: center; justify-content: space-between; padding: 0 3px 0 5px; color: #111; }
.meas { margin: 0 5px 0 13px; border-top: 1px solid #ddd; }
.meas li { height: 17.800px; margin-left: -13px; white-space: nowrap; }

/* cards */
.cards { width: 141.500px; padding-left: 5px; margin-top: -1px; }
.card { width: 131px; border: 1px solid #d8d8d8; background: #fafafa; padding: 5px 5px; line-height: 15px; font-size: 11px; }
.pages { height: 53px; } .filters { height: 66px; margin-top: 5px; } .marks { height: 258px; margin-top: 6px; padding: 0; }
.mhead { height: 25px; padding: 5px; border-bottom: 1px solid #e0e0e0; }
.mrow { height: 27px; display: flex; padding: 0 10px; color: #111; border-bottom: 1px solid #e0e0e0; font-size: 11px; }
.mrow svg { width: 12px; height: 12px; margin: 7px 8px 0 0; }
.mrow > :last-child { padding-top: 8px; }
.mrow:last-child { border: 0; }
.mbody { height: 150px; border-bottom: 1px solid #e0e0e0; padding: 4px 4px 0 5px; }
.mtype { height: 18px; border: 1px solid #ccc; display: flex; align-items: center; padding-left: 9px; font-size: 9.500px; width: 119px; }
.mtype > svg { width: 11px; height: 11px; margin-right: 5px; }
.mtype i { margin-left: auto; width: 16px; height: 16px; border-left: 1px solid #ddd; display: flex; align-items: center; justify-content: center; }
.mbtns { display: grid; grid-template-columns: repeat(3, 37px); gap: 4px; margin-top: 5px; }
.mbtns div { height: 37px; border: 1px solid #d4d4d4; display: flex; flex-direction: column; align-items: center; font-size: 9.400px; line-height: 12px; padding-top: 4px; gap: 4px; }
.mbtns svg { width: 14px; height: 14px; }

/* shelves and sheet */
.work { width: 899px; }
.shelf { height: 23px; border: 1px solid #d8d8d8; background: #fafafa; display: flex; align-items: center; gap: 2px; }
.shelf.rows { height: 24px; margin-top: 5px; }
.sname { width: 105.500px; height: 100%; border-right: 1px solid #d8d8d8; display: flex; align-items: center; padding-left: 4.500px; gap: 5px; font-size: 11px; }
.sname svg { width: 11px; height: 11px; }
.pill { width: 125.500px; height: 17.500px; border-radius: 9px; color: #fff; padding-left: 8.500px; line-height: 17px; font-size: 10.800px; }
.pill.green { background: #00b180; } .pill.blue { background: #4596b6; }
.sheet { height: 523px; margin-top: 5px; background: #fff; border: 1px solid #d8d8d8; padding: 11px 7px; font-family: "Open Sans", "Noto Sans", sans-serif; }
h1 { font-weight: 300; font-size: 17.500px; line-height: 20px; height: 29px; margin: 0 0 0 1px; color: #222; letter-spacing: .2px; }
.viz { width: 883px; font-size: 10.500px; color: #757575; }
.vhead { height: 18px; display: flex; border-bottom: 1px solid #ddd; }
.vhead b { width: 86px; border-right: 1px solid #ccc; text-align: right; padding-right: 4px; line-height: 19px; color: #333; }
.vhead i { flex: 1; border-right: 1px solid #d8d8d8; }
.vmain { display: flex; height: 321px; }
.labels { width: 85px; padding-right: 4px; text-align: right; letter-spacing: .25px; }
.labels div { height: 17px; line-height: 16px; }
.pane { width: 398.500px; border-left: 1px solid #d0d0d0; padding-top: 1px; background-repeat: repeat-x; }
#female { background-image: linear-gradient(90deg, transparent 45.300px, #f0f0f0 45.300px); background-size: 46.300px 100%; background-position-x: -1px; }
#male { background-image: linear-gradient(90deg, transparent 48.400px, #f0f0f0 48.400px); background-size: 49.400px 100%; background-position-x: -1px; width: 399.500px; border-right: 1px solid #d8d8d8; }
.bar { height: 13px; margin: 0 0 4px -.7px; background: #4b77aa; }
.vaxes { display: flex; height: 47px; }
.corner { width: 85px; border-top: 1px solid #ddd; }
.axis { position: relative; width: 398.500px; border-left: 1px solid #ccc; border-top: 1px solid #ddd; text-align: center; padding-top: 25px; color: #333; line-height: 16px; }
.axis b { font-weight: 600; font-size: 10.300px; }
#axis-male { width: 399.500px; border-right: 1px solid #d0d0d0; }
.tick { position: absolute; top: 5px; transform: translateX(-50%); color: #757575; }
.tick.first { transform: none; } .tick.last { transform: translateX(-100%); }

/* workbook tabs and status */
.tabs { height: 26px; flex: none; display: flex; background: #e6e6e6; border-top: 1px solid #d8d8d8; }
.tab { display: flex; align-items: center; border-right: 1px solid #cfcfcf; }
.src { width: 111px; padding-left: 8px; gap: 4px; color: #666; font-size: 10.800px; }
.src svg { width: 8px; height: 10px; }
.cur { width: 50px; background: #fafafa; justify-content: center; font-size: 11.200px; }
.add { width: 27px; justify-content: center; } .add svg { width: 14px; height: 14px; }
.status { height: 18px; flex: none; display: flex; align-items: center; background: linear-gradient(#ececec, #d9d9d9); border-top: 1px solid #d8d8d8; font: 8.700px Inter; color: #111; padding-left: 10px; }
.status { height: 18px; padding-bottom: 0; box-shadow: 0 1px 0 #d9d9d9; }
.s1 { width: 51.500px; } .s2 { width: 98px; } .s3 { flex: 1; }
.status i { border-left: 1px solid #c4c4c4; height: 17px; }
.c1 { width: 108px; } .c2 { width: 23px; } .c3 { width: 40px; }
.nav { width: 60px; height: 17px; border: solid #c4c4c4; border-width: 0 1px; display: flex; align-items: center; gap: 5.700px; padding: 0 0 0 5px; }
.nav svg { width: 8px; height: 8px; }
.views { width: 66px; padding: 0 0 0 8px; display: flex; gap: 8px; }
.views svg { width: 10px; height: 10px; }

/* dock */
.dock { flex: none; margin: 6px 0 0 30.500px; width: 1163px; height: 46px; border: 1px solid #ffffff30; border-radius: 12px; background: linear-gradient(90deg, #261743aa, #2c1652aa 55%, #55106fcc 75%, #3a1760aa 88%, #261644aa); display: flex; padding-left: 1px; }
.app { position: relative; width: 37.470px; height: 44px; flex: none; display: flex; justify-content: center; padding-top: 6px; }
.app > svg, .app > span { width: 29px; height: 29px; }
.app.run::after { content: ""; position: absolute; bottom: 2px; left: 17.300px; width: 3px; height: 3px; border-radius: 50%; background: #cbb7e0; }
.dsep { width: 1px; height: 33px; margin: 6px 8px 0; background: #ffffff38; flex: none; }
.badge { position: absolute; left: 24px; top: 2px; width: 14px; height: 14px; border-radius: 50%; background: #ee3b35; color: #fff; font: 8.500px/14px Inter; text-align: center; }
.cal span { border-radius: 6px; overflow: hidden; background: #fafafa; text-align: center; display: flex; flex-direction: column; }
.cal i { background: #ee4f46; color: #fff; font-size: 6.500px; height: 10px; line-height: 10px; }
.cal b { font: 400 16.500px/18px Inter; color: #333; }
.tv span { background: #142024; border-radius: 6px; color: #fff; display: flex; align-items: center; justify-content: center; gap: 1px; }
.tv span svg { width: 9px; height: 11px; } .tv b { font: 500 12px/28px Inter; }
.rs span { background: #fff; border-radius: 6px; display: flex; justify-content: center; padding-top: 2px; }
.rs b { width: 24px; height: 24px; border-radius: 50%; background: #7ba6d8; color: #fff; font: 15px/23px "Liberation Serif", serif; text-align: center; }
.rs em { position: absolute; left: 1.500px; top: 30.500px; width: 35px; height: 7px; border-radius: 2px; background: #7daedb; color: #fff; font: 5px/7px Inter; text-align: center; }
.ltr { position: absolute; left: 7px; top: 14px; width: 11.500px; text-align: center; color: #fff; font: 700 8.500px/13px "Open Sans", sans-serif; }
.big > svg { width: 31px; height: 31px; margin-top: -1px; }
.wx { --ring: #07d65c; }
.yd span { background: #f9071d; border-radius: 6px; color: #fff; font: 900 11px/28px "Noto Sans CJK SC"; text-align: center; }
.trash > svg { width: 25px; height: 32px; margin-top: -2px; }
```

FILE: chart.js
```js
const groups = ['0_to_4', '5_to_9', '10_to_14', '15_to_19', '20_to_24', '25_to_29', '30_to_34',
  '35_to_39', '40_to_44', '45_to_49', '50_to_54', '55_to_59', '60_to_64', '65_to_69',
  '70_to_74', '75_to_79', '80_to_84', '85_to_89', '90_and_over'];

// Bar lengths in pixels on each pane's own scale.
const series = {
  female: { step: 46.3, bars: [202, 227.5, 230, 234.5, 263.5, 325.5, 379.5, 355, 364.5, 363.5, 348.5, 349, 334.5, 292, 228.5, 134, 101.5, 55, 37] },
  male: { step: 49.4, bars: [223.7, 255.2, 254.2, 260.2, 295.2, 346.2, 379.2, 339.2, 352.2, 363.7, 352.7, 368.7, 354.7, 300.7, 222.7, 119.2, 76.7, 34.2, 16.2] }
};

const add = (parent, cls, text) => {
  const el = document.createElement('div');
  if (cls) el.className = cls;
  if (text) el.textContent = text;
  parent.appendChild(el);
  return el;
};

groups.forEach(g => add(document.getElementById('labels'), '', g));

for (const [name, s] of Object.entries(series)) {
  s.bars.forEach(w => { add(document.getElementById(name), 'bar').style.width = w + 'px'; });
  const axis = document.getElementById('axis-' + name);
  for (let k = 0; k <= 8; k++) {
    const clipped = name === 'male' && k === 8;
    const cls = k === 0 ? 'tick first' : clipped ? 'tick last' : 'tick';
    add(axis, cls, k * 20 + 'K').style.left = (k === 0 ? 0.5 : clipped ? 396.5 : k * s.step - 1) + 'px';
  }
}
```
